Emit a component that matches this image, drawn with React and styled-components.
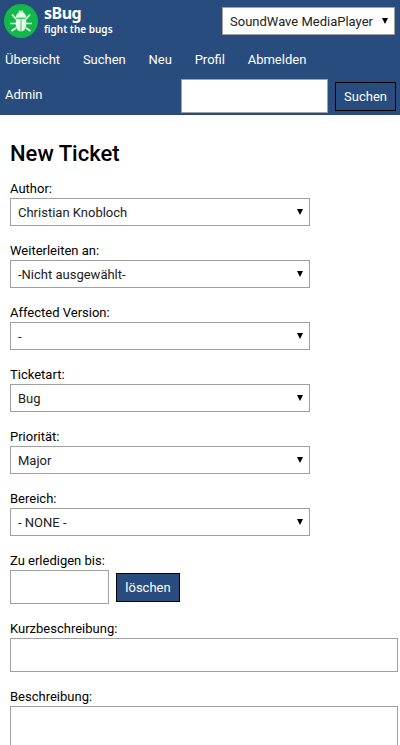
import React from "react";
import styled, { createGlobalStyle } from "styled-components";

const GlobalStyle = createGlobalStyle`
	html, body {
		margin: 0;
		padding: 0;
		background: #fff;
	}
	body {
		font-family: Roboto, "Liberation Sans", sans-serif;
		font-size: 14px;
		color: #000;
		height: 745px;
		overflow: hidden;
	}
	* {
		box-sizing: border-box;
	}
`;

const BugIcon = () => (
	<svg width="34" height="34" viewBox="0 0 34 34">
		<circle cx="17" cy="17" r="17" fill="#12b84a" />
		<g fill="#e8fbe9" stroke="#e8fbe9">
			<path d="M12 13.5c0-2.5 1.5-4.5 3.5-5.2L15 6.5l2 1 2-1-.5 1.8c2 .7 3.5 2.700 3.500 5.200z" strokeWidth="0.4" />
			<path d="M12 15h4.400v12.200c-2.700-.4-4.400-2.700-4.400-5.700zM17.600 15H22v6.500c0 3-1.700 5.300-4.400 5.700z" strokeWidth="0.4" />
			<path d="M12 15L8 10.500M22 15l4-4.500M12 19.500H6M22 19.500h6M12 24l-4.500 3M22 24l4.500 3" strokeWidth="1.7" fill="none" />
		</g>
	</svg>
);

const Header = styled.header`
	background: #284c7e;
	height: 115px;
	display: flex;
	flex-direction: column;
`;

const TopRow = styled.div`
	display: flex;
	justify-content: space-between;
	padding: 4px 5px 0 4px;
	height: 44px;
`;

const Brand = styled.div`
	display: flex;
	align-items: flex-start;
	gap: 6px;
`;

const BrandText = styled.div`
	display: flex;
	flex-direction: column;
	color: #fff;
	font-family: "Noto Sans", sans-serif;
	font-weight: 600;
`;

const BrandName = styled.span`
	font-size: 16px;
	font-weight: 700;
	line-height: 20px;
	margin-top: -1px;
	letter-spacing: -0.5px;
`;

const BrandTag = styled.span`
	font-size: 10px;
	line-height: 14px;
	margin-top: -1px;
`;

const Select = styled.div`
	position: relative;
	display: flex;
	align-items: center;
	width: ${(p) => p.$width || "300px"};
	height: 28px;
	margin-top: ${(p) => p.$top || "0"};
	padding-left: 7px;
	background: #fff;
	border: 1px solid #a0a0a0;
	font-size: 13px;
	color: #222;

	&::after {
		content: "";
		position: absolute;
		right: 6px;
		top: 10px;
		border-left: 3px solid transparent;
		border-right: 3px solid transparent;
		border-top: 6px solid #000;
	}
`;

const Nav = styled.nav`
	display: flex;
	gap: 22.75px;
	padding-left: 5px;
	height: 35px;
	align-items: flex-start;
	padding-top: 8px;
`;

const NavLink = styled.a`
	color: #fff;
	font-size: 13px;
	font-weight: 400;
	line-height: 15px;
`;

const AdminRow = styled.div`
	display: flex;
	align-items: flex-start;
	padding-left: 5px;
`;

const AdminLink = styled(NavLink)`
	margin-top: 8px;
	flex: 1;
`;

const SearchInput = styled.div`
	width: 147px;
	height: 34px;
	background: #fff;
	border: 1px solid #a0a0a0;
`;

const SearchButton = styled.button`
	width: 61px;
	height: 29px;
	margin: 3px 4px 0 7px;
	padding: 0;
	background: #284c7e;
	border: 1px solid #000;
	color: #fff;
	font-family: inherit;
	font-size: 13px;
`;

const Main = styled.main`
	padding: 25px 2px 0 10px;
`;

const Title = styled.h1`
	margin: 0 0 12px;
	font-size: 22px;
	line-height: 28px;
	font-weight: 500;
	color: #000;
`;

const Field = styled.div`
	display: flex;
	flex-direction: column;
	margin-bottom: 16px;
`;

const Label = styled.label`
	font-size: 13px;
	line-height: 17px;
	height: 18px;
	color: #000;
`;

const DateRow = styled.div`
	display: flex;
	align-items: center;
	gap: 7px;
`;

const TextBox = styled.div`
	width: ${(p) => p.$width || "100%"};
	height: ${(p) => p.$height || "34px"};
	background: #fff;
	border: 1px solid #a0a0a0;
`;

const ClearButton = styled.button`
	width: 64px;
	height: 29px;
	padding: 0;
	background: #284c7e;
	border: 1px solid #000;
	color: #fff;
	font-family: inherit;
	font-size: 13px;
`;

const fields = [
	["Author:", "Christian Knobloch"],
	["Weiterleiten an:", "-Nicht ausgewählt-"],
	["Affected Version:", "-"],
	["Ticketart:", "Bug"],
	["Priorität:", "Major"],
	["Bereich:", "- NONE -"],
];

const App = () => {
	return (
		<>
			<GlobalStyle />
			<Header>
				<TopRow>
					<Brand>
						<BugIcon />
						<BrandText>
							<BrandName>sBug</BrandName>
							<BrandTag>fight the bugs</BrandTag>
						</BrandText>
					</Brand>
					<Select $width="173px" $top="3px">SoundWave MediaPlayer</Select>
				</TopRow>
				<Nav>
					<NavLink>Übersicht</NavLink>
					<NavLink>Suchen</NavLink>
					<NavLink>Neu</NavLink>
					<NavLink>Profil</NavLink>
					<NavLink>Abmelden</NavLink>
				</Nav>
				<AdminRow>
					<AdminLink>Admin</AdminLink>
					<SearchInput />
					<SearchButton>Suchen</SearchButton>
				</AdminRow>
			</Header>
			<Main>
				<Title>New Ticket</Title>
				{fields.map(([label, value]) => (
					<Field key={label}>
						<Label>{label}</Label>
						<Select>{value}</Select>
					</Field>
				))}
				<Field>
					<Label>Zu erledigen bis:</Label>
					<DateRow>
						<TextBox $width="99px" />
						<ClearButton>löschen</ClearButton>
					</DateRow>
				</Field>
				<Field>
					<Label>Kurzbeschreibung:</Label>
					<TextBox />
				</Field>
				<Field>
					<Label>Beschreibung:</Label>
					<TextBox $height="120px" />
				</Field>
			</Main>
		</>
	);
};

export default App;
